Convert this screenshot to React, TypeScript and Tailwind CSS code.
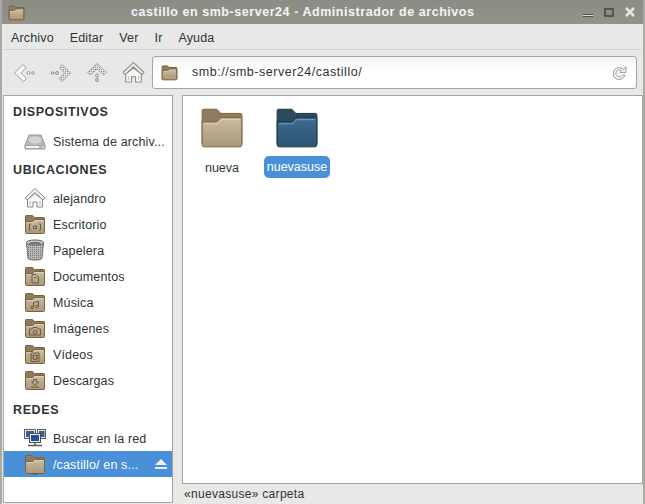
import { useId } from 'react';
import type { ReactNode } from 'react';

const font = { fontFamily: '"Liberation Sans", Arial, sans-serif' };

function Folder({ size = 22, back = '#8f7b60', top = '#c9bba3', bottom = '#a99778', edge = '#7d6238', glyph }: { size?: number; back?: string; top?: string; bottom?: string; edge?: string; glyph?: ReactNode }) {
  const id = useId();
  return (
    <svg width={size} height={size} viewBox="0 0 22 22">
      <defs>
        <linearGradient id={id} x1="0" y1="0" x2="0" y2="1">
          <stop offset="0" stopColor={top} />
          <stop offset="1" stopColor={bottom} />
        </linearGradient>
      </defs>
      <path d="M1.500 19V3.200Q1.500 2.500 2.200 2.500H8.500L10.500 4.500H19.800Q20.500 4.500 20.500 5.200V19Z" fill={back} stroke={edge} vectorEffect="non-scaling-stroke" />
      <path d="M1.500 19.500V8.500H8.500L10.500 6.500H20.500V19.500Q20.500 20.500 19.500 20.500H2.500Q1.500 20.500 1.500 19.500Z" fill={`url(#${id})`} stroke={edge} vectorEffect="non-scaling-stroke" />
      <path d="M2.500 9.500H9L11 7.500H19.500" fill="none" stroke="#ffffff" strokeOpacity="0.35" vectorEffect="non-scaling-stroke" />
      {glyph}
    </svg>
  );
}

const g = 'none';
const gs = '#6e5a3e';

const glyphs: Record<string, ReactNode> = {
  desktop: <path d="M7 11H5.500V17H7M15 11H16.500V17H15M9.500 13H12.500V15.500H9.500Z" fill={g} stroke={gs} />,
  docs: <path d="M8 9.500H12L14.500 12V18H8ZM10.500 12.500H12.500" fill={g} stroke={gs} />,
  music: <path d="M9.500 16V11.500L14.500 10.500V15M9.500 16.500A1.500 1.200 0 1 1 6.500 16.500A1.500 1.200 0 1 1 9.500 16.500ZM14.500 15.500A1.500 1.200 0 1 1 11.500 15.500A1.500 1.200 0 1 1 14.500 15.500Z" fill={g} stroke={gs} />,
  images: <path d="M5.500 12H8L9 10.500H13L14 12H16.500V18H5.500ZM13 15A2 2 0 1 1 9 15A2 2 0 1 1 13 15Z" fill={g} stroke={gs} />,
  videos: <path d="M7 10H15V18.500H7ZM9.500 12H12.500V16.500H9.500ZM7 12.500H9.500M7 15H9.500M12.500 12.500H15M12.500 15H15" fill={g} stroke={gs} />,
  downloads: <path d="M9.500 10.500H12.500V13H14.500L11 16.500L7.500 13H9.500ZM7 18H15" fill={g} stroke={gs} />,
  share: <path d="M9 20.500H13V21.500H9Z" fill="#4d4d4b" />,
};

function HomeIcon({ size = 22 }: { size?: number }) {
  return (
    <svg width={size} height={size} viewBox="0 0 22 22">
      <path d="M11 1.500L21 11L19 13L11 5.500L3 13L1 11Z" fill="#f4f4f2" stroke="#8b8b87" strokeLinejoin="round" />
      <path d="M3.500 12.500V20H9V15H13V20H18.500V12.500L11 6.500Z" fill="#f7f7f6" stroke="#8b8b87" strokeLinejoin="round" />
      <path d="M6 14V18M16 14V18" stroke="#b5b5b2" />
    </svg>
  );
}

function DriveIcon() {
  return (
    <svg width="22" height="22" viewBox="0 0 22 22">
      <path d="M5 5H17L21 15V19H1V15Z" fill="#b9bab6" stroke="#9a9b98" strokeLinejoin="round" />
      <ellipse cx="11" cy="10" rx="6.500" ry="3.500" fill="#d4d5d2" />
      <path d="M1.500 15.500H20.500V18.500H1.500Z" fill="#f2f2f0" stroke="#a5a6a3" />
      <path d="M15 17H19" stroke="#8a8a8a" />
    </svg>
  );
}

function TrashIcon() {
  return (
    <svg width="22" height="22" viewBox="0 0 22 22">
      <defs>
        <pattern id="mesh" width="2" height="2" patternUnits="userSpaceOnUse">
          <rect width="2" height="2" fill="#b8b8b6" />
          <rect width="1" height="1" fill="#77787a" />
        </pattern>
      </defs>
      <path d="M2.500 4L4 19Q4 21 11 21Q18 21 18 19L19.500 4Z" fill="url(#mesh)" stroke="#6f706e" />
      <ellipse cx="11" cy="3.500" rx="8.500" ry="2.500" fill="#d5d5d3" stroke="#5f605e" />
      <ellipse cx="11" cy="4" rx="6" ry="1.300" fill="#77787a" />
    </svg>
  );
}

function NetworkIcon() {
  return (
    <svg width="22" height="22" viewBox="0 0 22 22">
      <rect x="0.500" y="2.500" width="11" height="9" fill="#e8e8e6" stroke="#5b5d5f" />
      <rect x="2" y="4" width="8" height="6" fill="#2f5f9d" />
      <rect x="13.500" y="2.500" width="8" height="9" fill="#e8e8e6" stroke="#5b5d5f" />
      <rect x="15" y="4" width="5.500" height="6" fill="#2f5f9d" />
      <rect x="5.500" y="6.500" width="11" height="9" fill="#f0f0ee" stroke="#4b4d4f" />
      <rect x="7" y="8" width="8" height="6" fill="#1f4f95" />
      <path d="M11 16V18M4 18.500H18" stroke="#5b5d5f" strokeWidth="1.500" />
    </svg>
  );
}

function BackIcon() {
  return (
    <svg width="24" height="24" viewBox="0 0 24 24">
      <path d="M11 3.500L2.500 12L11.500 20.500L14.500 17.500L9 12L14 7Z" fill="#f6f6f4" stroke="#a0a09c" strokeLinejoin="round" />
      <circle cx="16.500" cy="12" r="1.500" fill="#f3f3f1" stroke="#9c9c98" />
      <circle cx="21" cy="12" r="1.300" fill="#f3f3f1" stroke="#9c9c98" />
    </svg>
  );
}

function ForwardIcon() {
  return (
    <svg width="24" height="24" viewBox="0 0 24 24">
      <defs>
        <pattern id="hatch" width="2" height="2" patternUnits="userSpaceOnUse">
          <rect width="2" height="2" fill="#e4e4e2" />
          <rect width="1" height="1" fill="#8a8a87" />
        </pattern>
      </defs>
      <path d="M13 3.500L21.500 12L13 20.500L10 17.500L15.500 12L10.500 7Z" fill="url(#hatch)" stroke="#a5a5a2" strokeLinejoin="round" />
      <circle cx="8" cy="12" r="1.500" fill="#e4e4e2" stroke="#8a8a87" />
      <circle cx="3.500" cy="12" r="1.300" fill="#e4e4e2" stroke="#8a8a87" />
    </svg>
  );
}

function UpIcon() {
  return (
    <svg width="24" height="24" viewBox="0 0 24 24">
      <path d="M12 2.500L21.500 11.500L18.500 14L12 8L5.500 14L2.500 11.500Z" fill="url(#hatch)" stroke="#a5a5a2" strokeLinejoin="round" />
      <circle cx="12" cy="14.500" r="1.500" fill="#e4e4e2" stroke="#8a8a87" />
      <circle cx="12" cy="19" r="1.500" fill="#e4e4e2" stroke="#8a8a87" />
    </svg>
  );
}

function SideRow({ icon, label, selected, eject }: { icon: ReactNode; label: string; selected?: boolean; eject?: boolean }) {
  return (
    <div className={`flex h-[26px] shrink-0 items-center pl-[19px] pr-[5px] text-[12.5px] tracking-[0.15px] ${selected ? 'bg-[#4a90d9] text-white' : 'text-[#2e3436]'}`}>
      <div className="mr-[6px] flex w-[24px] justify-center">{icon}</div>
      <span className="flex-1 whitespace-nowrap pt-[2px]">{label}</span>
      {eject && (
        <svg width="12" height="12" viewBox="0 0 12 12">
          <path d="M6 1L12 7H0Z" fill="#eeeeec" />
          <rect y="9" width="12" height="2" fill="#eeeeec" />
        </svg>
      )}
    </div>
  );
}

function SectionTitle({ children, className = '' }: { children: ReactNode; className?: string }) {
  return <div className={`flex h-[18px] shrink-0 items-center pl-[9px] pt-[2px] text-[12.5px] font-bold tracking-[0.6px] text-[#2e3436] ${className}`}>{children}</div>;
}

export default function App() {
  return (
    <div className="flex h-[504px] w-[645px] flex-col overflow-hidden border-x-2 border-[#a9aaa5] bg-[#e8e8e7]" style={font}>
      <div className="-mx-[2px] flex h-[24px] shrink-0 items-center rounded-t-[3px] bg-gradient-to-b from-[#8b8d85] to-[#92948c] pl-[8px] pr-[10px]">
        <Folder size={17} />
        <span className="ml-[106px] text-[12.5px] font-bold tracking-[0.55px] text-[#f4f4f2]">castillo en smb-server24 - Administrador de archivos</span>
        <div className="ml-auto flex items-center gap-[11px]">
          <span className="mt-[7px] h-[3px] w-[10px] border-y border-[#4e504c] bg-[#dfdfdc]" />
          <span className="h-[9px] w-[10px] border-2 border-[#53554f] bg-[#8d8f87]" />
          <svg width="10" height="10" viewBox="0 0 10 10">
            <path d="M1 1L9 9M9 1L1 9" stroke="#e6e6e3" strokeWidth="2.500" />
          </svg>
        </div>
      </div>

      <div className="mx-[2px] flex h-[26px] shrink-0 items-center gap-[16px] border-b border-[#d2d2d0] pl-[7px] pt-[3px] text-[12.5px] tracking-[0.15px] text-[#2e3436]">
        <span>Archivo</span>
        <span>Editar</span>
        <span>Ver</span>
        <span>Ir</span>
        <span>Ayuda</span>
      </div>

      <div className="flex h-[45px] shrink-0 items-center pl-[10px] pr-[6px]">
        <div className="flex w-[140px] items-center gap-[12.5px]">
          <BackIcon />
          <ForwardIcon />
          <UpIcon />
          <HomeIcon size={23} />
        </div>
        <div className="flex h-[33px] flex-1 items-center rounded-[3px] border border-[#a5a6a2] bg-gradient-to-b from-[#f3f3f3] via-white to-white pl-[8px] pr-[9px] text-[12.5px] tracking-[0.52px] text-[#2e3436]">
          <Folder size={17} />
          <span className="ml-[14px] flex-1">smb://smb-server24/castillo/</span>
          <svg width="16" height="16" viewBox="0 0 16 16">
            <path d="M13 5A6 6 0 1 0 14 10H11.500A3.500 3.500 0 1 1 10.500 5.500L9 7.500H15V1.500L13 4" fill="#f2f2f0" stroke="#9d9d9a" />
          </svg>
        </div>
      </div>

      <div className="flex h-[389px] shrink-0 items-start">
        <div className="ml-[1px] flex h-[408px] w-[170px] shrink-0 flex-col border border-[#a5a6a2] bg-white pt-[6px]">
          <SectionTitle className="mb-[8px]">DISPOSITIVOS</SectionTitle>
          <SideRow icon={<DriveIcon />} label="Sistema de archiv..." />
          <SectionTitle className="mb-[7px] mt-[6px]">UBICACIONES</SectionTitle>
          <SideRow icon={<HomeIcon />} label="alejandro" />
          <SideRow icon={<Folder glyph={glyphs.desktop} />} label="Escritorio" />
          <SideRow icon={<TrashIcon />} label="Papelera" />
          <SideRow icon={<Folder glyph={glyphs.docs} />} label="Documentos" />
          <SideRow icon={<Folder glyph={glyphs.music} />} label="Música" />
          <SideRow icon={<Folder glyph={glyphs.images} />} label="Imágenes" />
          <SideRow icon={<Folder glyph={glyphs.videos} />} label="Vídeos" />
          <SideRow icon={<Folder glyph={glyphs.downloads} />} label="Descargas" />
          <SectionTitle className="mb-[7px] mt-[7px]">REDES</SectionTitle>
          <SideRow icon={<NetworkIcon />} label="Buscar en la red" />
          <SideRow icon={<Folder glyph={glyphs.share} />} label="/castillo/ en s..." selected eject />
        </div>

        <div className="ml-[9px] flex flex-1 flex-col">
          <div className="flex h-[389px] gap-[9px] border border-[#a5a6a2] bg-white pl-[6px] pt-[8px] text-[12.5px]">
            <div className="flex w-[66px] flex-col items-center">
              <Folder size={46} />
              <span className="mt-[6px] flex h-[22px] items-center px-[2px] pt-[2px] text-[#2e3436]">nueva</span>
            </div>
            <div className="flex w-[66px] flex-col items-center">
              <Folder size={46} back="#2b4a5b" top="#3b6b90" bottom="#2f5370" edge="#1f3644" />
              <span className="mt-[6px] flex h-[22px] w-[66px] items-center justify-center rounded-[5px] bg-[#4a90d9] pt-[1px] text-white">nuevasuse</span>
            </div>
          </div>
          <div className="flex h-[20px] items-center pl-[2px] text-[12px] tracking-[0.3px] text-[#2e3436]">«nuevasuse» carpeta</div>
        </div>
      </div>
    </div>
  );
}
